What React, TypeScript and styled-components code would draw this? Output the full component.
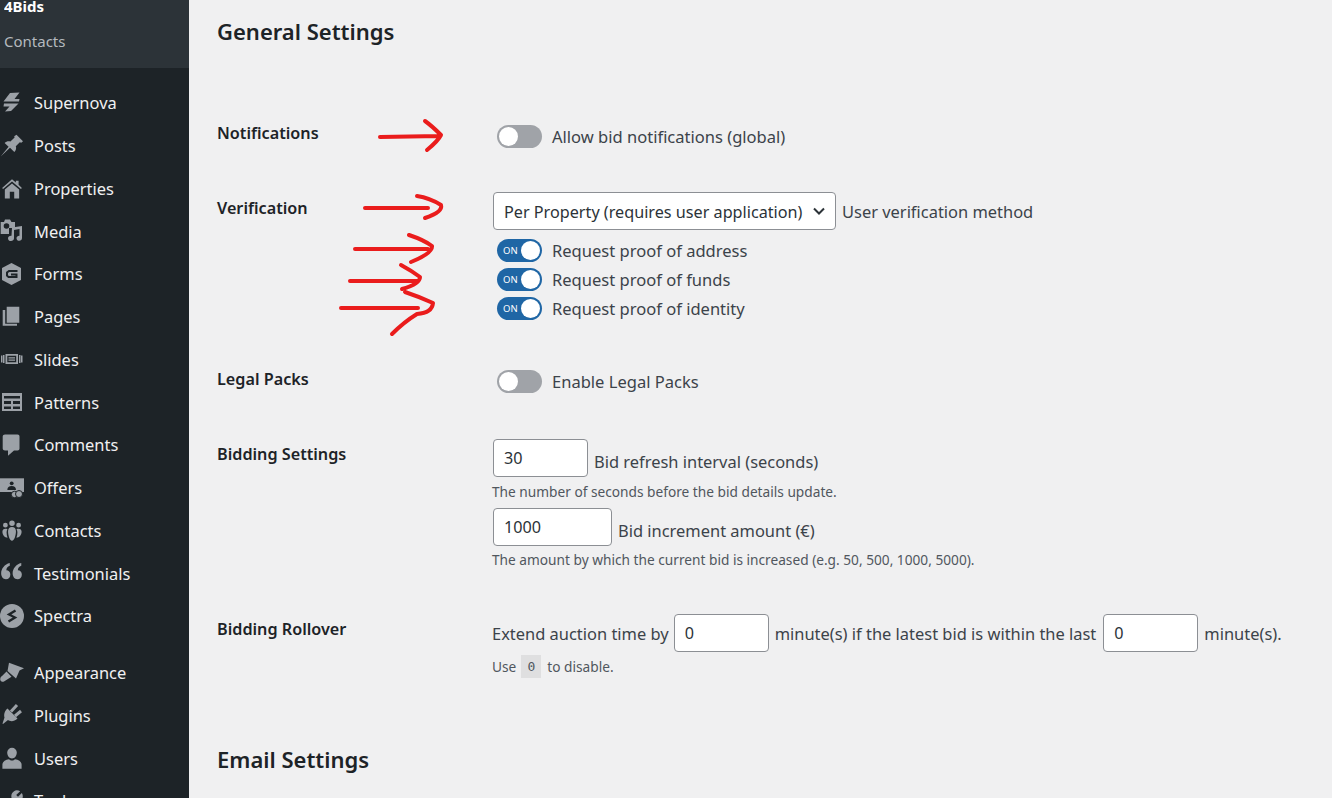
import React from "react";
import styled, { createGlobalStyle } from "styled-components";

const GlobalStyle = createGlobalStyle`
  html, body {
    margin: 0;
    height: 798px;
    overflow: hidden;
    background: #f0f0f1;
  }
  * { box-sizing: border-box; }
`;

const FONT = `"Noto Sans", "Open Sans", Arial, sans-serif`;
const ICON = "#9ca1a7";
const DARK = "#1d2327";

const Page = styled.div`
  position: relative;
  display: flex;
  width: 1332px;
  height: 798px;
  overflow: hidden;
  font-family: ${FONT};
  color: #3c434a;
`;

const Sidebar = styled.nav`
  flex: 0 0 189px;
  height: 798px;
  overflow: hidden;
  background: ${DARK};
`;

const SubMenu = styled.div`
  height: 68px;
  padding: 0 0 0 4px;
  background: #2c3338;
`;

const SubTitle = styled.div`
  height: 13px;
  overflow: hidden;
  color: #fff;
  font-size: 15px;
  font-weight: 700;
  line-height: 13px;
  & > span { display: block; margin-top: -4px; line-height: 20px; }
`;

const SubItem = styled.div`
  margin-top: 17px;
  color: #b4b9be;
  font-size: 15px;
  line-height: 22px;
`;

const MenuList = styled.div`
  padding-top: 13.4px;
`;

const MenuItem = styled.div<{ $gap?: boolean }>`
  display: flex;
  align-items: center;
  height: 42.75px;
  margin-top: ${(p) => (p.$gap ? "14px" : "0")};
  color: #f0f0f1;
  font-size: 16.45px;
`;

const MenuIcon = styled.svg`
  flex: 0 0 24px;
  width: 24px;
  height: 24px;
  margin: 0 10px 0 0;
  fill: ${ICON};
`;

const Main = styled.main`
  flex: 1;
  padding: 0 0 0 28px;
`;

const Heading = styled.h2<{ $top: number }>`
  margin: ${(p) => p.$top}px 0 0;
  color: ${DARK};
  font-size: 22px;
  font-weight: 600;
  line-height: 32px;
`;

const FormRow = styled.section<{ $top: number }>`
  display: grid;
  grid-template-columns: 275px 1fr;
  margin-top: ${(p) => p.$top}px;
`;

const RowLabel = styled.div<{ $offset?: number }>`
  margin-top: ${(p) => p.$offset ?? 0}px;
  color: ${DARK};
  font-size: 16.2px;
  font-weight: 600;
  line-height: 24px;
`;

const Field = styled.div`
  display: flex;
  flex-direction: column;
`;

const ToggleLine = styled.label<{ $top?: number }>`
  display: flex;
  align-items: center;
  height: 29px;
  margin-top: ${(p) => p.$top ?? 0}px;
  padding-left: 5px;
  font-size: 16.55px;
`;

const Toggle = styled.span<{ $on?: boolean }>`
  position: relative;
  flex: 0 0 45px;
  height: 23px;
  margin-right: 10px;
  border-radius: 12px;
  background: ${(p) => (p.$on ? "#1f66a5" : "#a0a3a8")};
  &::after {
    content: "";
    position: absolute;
    top: 2px;
    left: ${(p) => (p.$on ? "24px" : "2px")};
    width: 19px;
    height: 19px;
    border-radius: 50%;
    background: #fff;
  }
`;

const ToggleText = styled.span`
  position: absolute;
  top: 0;
  left: 6px;
  color: #fff;
  font-size: 9.5px;
  line-height: 23px;
`;

const InlineLine = styled.div`
  display: flex;
  align-items: center;
  font-size: 16.45px;
  white-space: nowrap;
`;

const LowText = styled.span`
  padding-top: 6px;
`;

const SelectBox = styled.div`
  position: relative;
  width: 343px;
  height: 38px;
  margin: 0 6px 0 1px;
`;

const Select = styled.select`
  display: block;
  width: 100%;
  height: 100%;
  padding: 2px 24px 0 10px;
  border: 1px solid #8c8f94;
  border-radius: 4px;
  background: #fff;
  color: #2c3338;
  font: 400 16.2px ${FONT};
  appearance: none;
`;

const Chevron = styled.svg`
  position: absolute;
  top: 11px;
  right: 9px;
  width: 16px;
  height: 16px;
  fill: none;
  stroke: #2c3338;
  stroke-width: 2;
  pointer-events: none;
`;

const NumberInput = styled.input<{ $width: number; $left?: number }>`
  width: ${(p) => p.$width}px;
  height: 38px;
  margin: 0 6px 0 ${(p) => p.$left ?? 0}px;
  padding: 0 10px;
  border: 1px solid #8c8f94;
  border-radius: 4px;
  background: #fff;
  color: #2c3338;
  font: 400 16.2px ${FONT};
`;

const Hint = styled.p<{ $top: number; $bottom?: number }>`
  display: flex;
  align-items: center;
  margin: ${(p) => p.$top}px 0 ${(p) => p.$bottom ?? 0}px;
  color: #50575e;
  font-size: 13.7px;
  line-height: 20px;
  white-space: nowrap;
`;

const Code = styled.code`
  width: 20px;
  height: 23px;
  margin: 0 6px 0 5px;
  background: #dfdfe0;
  font: 13px/23px "DejaVu Sans Mono", monospace;
  text-align: center;
`;

const ArrowLayer = styled.svg`
  position: absolute;
  top: 0;
  left: 0;
  width: 1332px;
  height: 798px;
  fill: none;
  stroke: #ea1c1c;
  stroke-width: 4;
  stroke-linecap: round;
  stroke-linejoin: round;
  pointer-events: none;
`;

// menu icons, drawn on a 24px box
const icons: Record<string, React.ReactNode> = {
  bolt: (
    <>
      <path d="M10 2L19.500 1.500L14.500 8H19.500L19 10.500H3.500Z" />
      <path d="M4 12.500H18.500L11 20L5 20.500L9.500 15.500H3.500Z" />
    </>
  ),
  pin: <path d="M16.500 .8L23 7.300L21.300 8.800L19.800 8.200L15.800 12.200C16.600 14.300 16 16.500 14.300 18L10 13.800L.7 22.500L8.600 12.800L4.600 9C6.300 7.400 8.400 6.900 10.400 7.600L14.600 3.600L14.200 2.200Z" />,
  home: (
    <path
      transform="translate(1 1.500) scale(1.100)"
      fillRule="evenodd"
      d="M10 1.500l3.500 3V3H16v3.600L19 9.500l-.9 1L10 3.700 1.900 10.500 1 9.500 10 1.500zM3.500 11L10 5.500l6.500 5.500v8h-13v-8zM8 13v6h4v-6H8z"
    />
  ),
  media: (
    <>
      <path
        fillRule="evenodd"
        d="M.7 3H4L5 .5H10L11.500 3H15V9H9V15H.7ZM6.500 4.200A2.800 2.800 0 1 0 6.500 9.800A2.800 2.800 0 1 0 6.500 4.200Z"
      />
      <path d="M12 8.500L22 7V19C22 20.800 20.800 21.800 19.300 21.800C17.800 21.800 16.500 20.800 16.500 19.200C16.500 17.700 17.800 16.600 19.500 16.700V10L14 11V19.300C14 21 12.500 22 11 22C9.500 22 8 21 8 19.400C8 17.800 9.500 16.600 11.500 16.800Z" />
    </>
  ),
  forms: (
    <>
      <path d="M11.500 1L21 6V18L11.500 23L2 18V6Z" />
      <path
        d="M17.500 9H9L7 10.500V13.500L8.500 15H16.500V12.500H11"
        fill="none"
        stroke={DARK}
        strokeWidth="2"
      />
    </>
  ),
  pages: <path d="M6.700 1.700H19.300V17.700H6.700ZM2.700 5H5.200V18.700H17V20.700H2.700Z" />,
  slides: (
    <>
      <path
        fillRule="evenodd"
        d="M5.500 7H18V17H5.500ZM7.300 8.800V15.200H16.200V8.800Z"
      />
      <path d="M8.500 10.300H15V11.500H8.500ZM8.500 12.500H15V13.700H8.500Z" />
      <path d="M1 8.500H2.500V15.500H1ZM3 8H4.500V16H3ZM19 8H20.500V16H19ZM21 8.500H22.500V15.500H21Z" />
    </>
  ),
  patterns: (
    <path
      fillRule="evenodd"
      d="M2 3H22V21H2ZM4 6V8.500H20V6ZM4 11V14H11V11ZM13 11V14H20V11ZM4 16.500V19H11V16.500ZM13 16.500V19H20V16.500Z"
    />
  ),
  comment: <path d="M5 1.500H17.500C18.800 1.500 19.500 2.300 19.500 3.500V15.500C19.500 16.700 18.800 17.500 17.500 17.500H14L8 22.700V17.500H5C3.700 17.500 2.700 16.700 2.700 15.500V3.500C2.700 2.300 3.700 1.500 5 1.500Z" />,
  offers: (
    <>
      <path d="M0 2.300H24V16H0Z" />
      <circle cx="11.700" cy="7.300" r="1.900" fill={DARK} />
      <path d="M7.300 14C7.300 11.500 9 10 11.700 10C14.400 10 16 11.500 16 14Z" fill={DARK} />
      <circle cx="14.500" cy="18.500" r="3.200" stroke={DARK} />
      <circle cx="19" cy="18" r="3.500" stroke={DARK} />
    </>
  ),
  contacts: (
    <path
      transform="scale(1.200)"
      d="M10 2a2.300 2.300 0 110 4.600A2.300 2.300 0 0110 2zM4.500 4a2 2 0 110 4 2 2 0 010-4zm11 0a2 2 0 110 4 2 2 0 010-4zM10 7.500c2 0 3.300 1.300 3.300 3.500 0 3-1.300 8-3.300 8s-3.300-5-3.300-8c0-2.200 1.300-3.500 3.300-3.500zM4.500 9c.7 0 1.200.1 1.700.4-.5.900-.7 1.700-.7 2.600 0 1.500.3 3 .8 4.500C4 16.500 2 14 2 11.500 2 10 3 9 4.500 9zm11 0c1.500 0 2.500 1 2.500 2.500 0 2.500-2 5-4.300 5 .5-1.500.8-3 .8-4.500 0-.9-.2-1.700-.7-2.600.5-.3 1-.4 1.700-.4z"
    />
  ),
  quote: (
    <path
      transform="translate(0 -2.500) scale(1.150 1.250)"
      d="M8.500 3.500v2.300C6.500 6.500 5.600 7.800 5.500 9.300c2 0 3.500 1.400 3.500 3.400 0 2.200-1.600 3.800-3.800 3.800C2.500 16.500 1 14.500 1 11.800 1 8 4 4.500 8.500 3.500zm10 0v2.300c-2 .7-2.900 2-3 3.500 2 0 3.500 1.400 3.500 3.400 0 2.200-1.600 3.800-3.800 3.800-2.700 0-4.200-2-4.200-4.700 0-3.800 3-7.300 7.500-8.300z"
    />
  ),
  spectra: (
    <>
      <circle cx="12" cy="12" r="12" />
      <path
        d="M15.500 6.500L9 10.500L15 13.500L8.500 17.500"
        fill="none"
        stroke={DARK}
        strokeWidth="2.300"
      />
    </>
  ),
  brush: <path d="M9 1.700L24 7.300L19.500 9.500L16 17.500L7.500 10ZM6.500 10.500L11.500 15.800L4 20.500C2.500 21.300 .8 20.500 .3 19C0 17.500 .5 16 2 15Z" />,
  plug: (
    <>
      <path d="M7.500 5.500L17.500 15.500C14 19 10 18.500 8 17L3 21L2.500 20.500L4.500 14.500C3.500 11 5 7.500 7.500 5.500Z" />
      <path d="M17 2L11 8.500M21 8L15 13" fill="none" stroke={ICON} strokeWidth="3" />
    </>
  ),
  user: (
    <path
      transform="scale(1.200)"
      d="M10 1.500a4 4 0 014 4c0 2.500-1.700 5-4 5s-4-2.500-4-5a4 4 0 014-4zM7.500 11c.7.700 1.500 1 2.500 1s1.800-.3 2.500-1c3 .5 5.500 2 5.500 4.500V19H2v-3.500C2 13 4.500 11.500 7.500 11z"
    />
  ),
  tools: (
    <path
      transform="scale(1.200)"
      d="M14 1c1 0 2 .3 2.800.8L13.500 5l1.500 1.500 3.200-3.200c.5.800.8 1.700.8 2.700a5 5 0 01-6.600 4.700L5 18.500c-1 1-2.300 1-3 .3s-.7-2 .3-3l7.700-7.500A5 5 0 0114 1z"
    />
  ),
};

const menu = [
  ["Supernova", "bolt"],
  ["Posts", "pin"],
  ["Properties", "home"],
  ["Media", "media"],
  ["Forms", "forms"],
  ["Pages", "pages"],
  ["Slides", "slides"],
  ["Patterns", "patterns"],
  ["Comments", "comment"],
  ["Offers", "offers"],
  ["Contacts", "contacts"],
  ["Testimonials", "quote"],
  ["Spectra", "spectra"],
  ["Appearance", "brush"],
  ["Plugins", "plug"],
  ["Users", "user"],
  ["Tools", "tools"],
];

const arrows = [
  "M380 137 L440 136 M425 121 Q432 126 441 135 Q438 141 427 150",
  "M365 208 L428 208 M417 196 Q430 198 441 205 Q443 212 425 218",
  "M355 249 L428 249 M409 235 Q424 240 432 246 Q433 253 411 262",
  "M350 281 L418 281 M401 265 Q412 271 420 277 Q420 284 402 289",
  "M341 308 L418 308 M405 292 Q420 297 433 303 Q432 313 417 314 Q404 322 392 334",
];

const App = () => {
  return (
    <Page>
      <GlobalStyle />
      <Sidebar>
        <SubMenu>
          <SubTitle>
            <span>4Bids</span>
          </SubTitle>
          <SubItem>Contacts</SubItem>
        </SubMenu>
        <MenuList>
          {menu.map(([name, icon]) => (
            <MenuItem key={name} $gap={name === "Appearance"}>
              <MenuIcon viewBox="0 0 24 24">{icons[icon]}</MenuIcon>
              {name}
            </MenuItem>
          ))}
        </MenuList>
      </Sidebar>

      <Main>
        <Heading $top={15}>General Settings</Heading>

        <FormRow $top={74}>
          <RowLabel>Notifications</RowLabel>
          <Field>
            <ToggleLine $top={1}>
              <Toggle />
              Allow bid notifications (global)
            </ToggleLine>
          </Field>
        </FormRow>

        <FormRow $top={41}>
          <RowLabel $offset={4}>Verification</RowLabel>
          <Field>
            <InlineLine>
              <SelectBox>
                <Select defaultValue="property">
                  <option value="property">Per Property (requires user application)</option>
                </Select>
                <Chevron viewBox="0 0 16 16">
                  <path d="M3 5.500l5 5 5-5" />
                </Chevron>
              </SelectBox>
              User verification method
            </InlineLine>
            <ToggleLine $top={6}>
              <Toggle $on>
                <ToggleText>ON</ToggleText>
              </Toggle>
              Request proof of address
            </ToggleLine>
            <ToggleLine>
              <Toggle $on>
                <ToggleText>ON</ToggleText>
              </Toggle>
              Request proof of funds
            </ToggleLine>
            <ToggleLine>
              <Toggle $on>
                <ToggleText>ON</ToggleText>
              </Toggle>
              Request proof of identity
            </ToggleLine>
          </Field>
        </FormRow>

        <FormRow $top={44}>
          <RowLabel>Legal Packs</RowLabel>
          <Field>
            <ToggleLine>
              <Toggle />
              Enable Legal Packs
            </ToggleLine>
          </Field>
        </FormRow>

        <FormRow $top={43}>
          <RowLabel $offset={3}>Bidding Settings</RowLabel>
          <Field>
            <InlineLine>
              <NumberInput $width={95} $left={1} defaultValue="30" />
              <LowText>Bid refresh interval (seconds)</LowText>
            </InlineLine>
            <Hint $top={5} $bottom={6}>The number of seconds before the bid details update.</Hint>
            <InlineLine>
              <NumberInput $width={119} $left={1} defaultValue="1000" />
              <LowText>Bid increment amount (€)</LowText>
            </InlineLine>
            <Hint $top={4}>The amount by which the current bid is increased (e.g. 50, 500, 1000, 5000).</Hint>
          </Field>
        </FormRow>

        <FormRow $top={44}>
          <RowLabel $offset={3}>Bidding Rollover</RowLabel>
          <Field>
            <InlineLine>
              Extend auction time by
              <NumberInput $width={95} $left={5} defaultValue="0" />
              minute(s) if the latest bid is within the last
              <NumberInput $width={95} $left={7} defaultValue="0" />
              minute(s).
            </InlineLine>
            <Hint $top={3}>
              Use <Code>0</Code> to disable.
            </Hint>
          </Field>
        </FormRow>

        <Heading $top={65}>Email Settings</Heading>
      </Main>

      <ArrowLayer viewBox="0 0 1332 798">
        {arrows.map((d) => (
          <path key={d} d={d} />
        ))}
      </ArrowLayer>
    </Page>
  );
};

export default App;
